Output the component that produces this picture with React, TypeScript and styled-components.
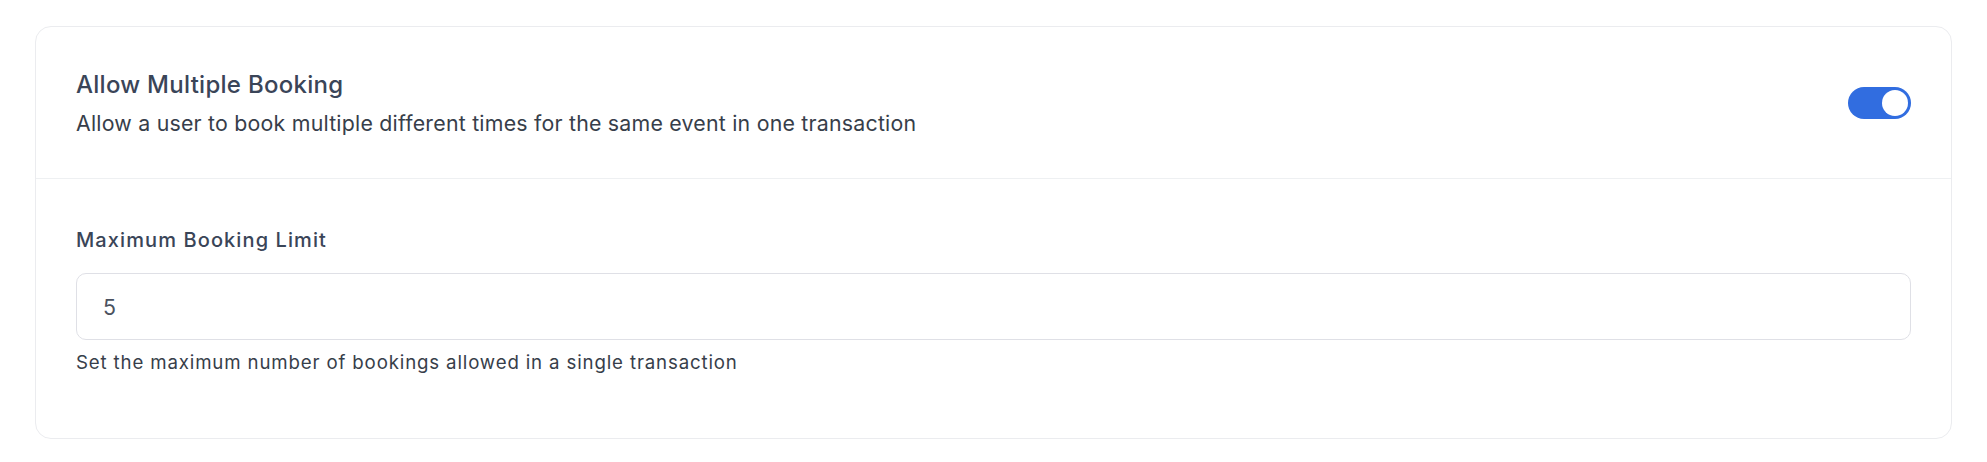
import * as React from "react";
import styled, { createGlobalStyle } from "styled-components";

const GlobalStyle = createGlobalStyle`
  body {
    margin: 0;
    background: #ffffff;
    font-family: Inter, "Noto Sans", sans-serif;
    -webkit-font-smoothing: antialiased;
  }
`;

const Page = styled.div`
  padding: 26px 35px 0 35px;
`;

const Card = styled.div`
  border: 1px solid #ebecef;
  border-radius: 16px;
  background: #ffffff;
`;

const Section = styled.div<{ $divided?: boolean }>`
  padding: ${(p) => (p.$divided ? "42px 40px 41px" : "48px 40px 62px")};
  border-bottom: ${(p) => (p.$divided ? "1px solid #eef0f2" : "none")};
`;

const Row = styled.div`
  display: flex;
  align-items: center;
  justify-content: space-between;
`;

const Title = styled.h3`
  margin: 0 0 8px;
  font-size: 24px;
  line-height: 32px;
  font-weight: 500;
  letter-spacing: 0.27px;
  color: #3a4558;
`;

const Description = styled.p`
  margin: 0;
  font-size: 21.33px;
  line-height: 28px;
  letter-spacing: 0.22px;
  color: #373e4a;
`;

const Toggle = styled.button<{ $on: boolean }>`
  position: relative;
  width: 63px;
  height: 32px;
  padding: 0;
  border: none;
  border-radius: 16px;
  background: ${(p) => (p.$on ? "#316de0" : "#d1d5db")};
  cursor: pointer;
  flex-shrink: 0;
`;

const Knob = styled.span<{ $on: boolean }>`
  position: absolute;
  top: 3px;
  left: ${(p) => (p.$on ? "34px" : "3px")};
  width: 26px;
  height: 26px;
  border-radius: 50%;
  background: #ffffff;
  transition: left 0.15s;
`;

const Label = styled.label`
  display: block;
  margin-bottom: 20px;
  font-size: 20px;
  line-height: 26px;
  font-weight: 500;
  letter-spacing: 1.1px;
  color: #3a4558;
`;

const Input = styled.input`
  box-sizing: border-box;
  display: block;
  width: 100%;
  height: 67px;
  padding: 0 26px;
  border: 1.5px solid #dfe0e6;
  border-radius: 10px;
  font-family: inherit;
  font-size: 21.33px;
  letter-spacing: 0.2px;
  color: #4b5260;
  background: #ffffff;
  outline: none;
`;

const Help = styled.p`
  margin: 10px 0 0;
  font-size: 18.67px;
  line-height: 26px;
  letter-spacing: 0.85px;
  color: #373e4a;
`;

export default function App() {
  const [multiple, setMultiple] = React.useState(true);
  const [limit, setLimit] = React.useState("5");

  return (
    <>
      <GlobalStyle />
      <Page>
        <Card>
          <Section $divided>
            <Row>
              <div>
                <Title>Allow Multiple Booking</Title>
                <Description>
                  Allow a user to book multiple different times for the same event in one transaction
                </Description>
              </div>
              <Toggle $on={multiple} onClick={() => setMultiple(!multiple)} aria-pressed={multiple}>
                <Knob $on={multiple} />
              </Toggle>
            </Row>
          </Section>
          <Section>
            <Label htmlFor="limit">Maximum Booking Limit</Label>
            <Input id="limit" value={limit} onChange={(e) => setLimit(e.target.value)} />
            <Help>Set the maximum number of bookings allowed in a single transaction</Help>
          </Section>
        </Card>
      </Page>
    </>
  );
}
